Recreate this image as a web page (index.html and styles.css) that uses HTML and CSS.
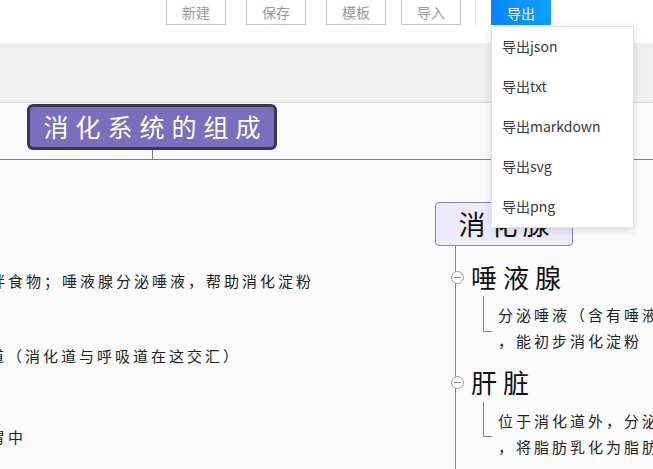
FILE: index.html
```html
<!DOCTYPE html>
<html lang="zh-CN">
<head>
<meta charset="utf-8">
<title>思维导图</title>
<link rel="stylesheet" href="styles.css">
</head>
<body>
<header class="toolbar">
  <button class="btn btn-new">新建</button>
  <button class="btn btn-save">保存</button>
  <button class="btn btn-tpl">模板</button>
  <button class="btn btn-import">导入</button>
  <span class="sep"></span>
  <button class="btn btn-export">导出</button>
</header>
<div class="ribbon"></div>
<main class="canvas">
  <svg class="links" width="653" height="366" viewBox="0 0 653 366">
    <g fill="none" stroke="#7f73c6" stroke-width="1">
      <line x1="0" y1="56.5" x2="653" y2="56.5"/>
      <line x1="152.5" y1="47" x2="152.5" y2="56"/>
      <line x1="504.5" y1="56" x2="504.5" y2="99"/>
      <line x1="455.5" y1="143" x2="455.5" y2="366"/>
      <polyline points="483.5,193 483.5,228.5 492,228.5"/>
      <polyline points="483.5,299 483.5,333.5 492,333.5"/>
    </g>
    <g fill="#fff" stroke="#9a9a9a" stroke-width="1">
      <circle cx="457.5" cy="174.5" r="6"/>
      <circle cx="457.5" cy="279.5" r="6"/>
    </g>
    <g stroke="#888" stroke-width="1">
      <line x1="454" y1="174.5" x2="461" y2="174.5"/>
      <line x1="454" y1="279.5" x2="461" y2="279.5"/>
    </g>
  </svg>

  <div class="node root">消化系统的组成</div>
  <div class="node branch">消化腺</div>
  <div class="node sub sub-1">唾液腺</div>
  <div class="node sub sub-2">肝脏</div>

  <div class="note note-r1"><div>分泌唾液（含有唾液淀粉酶）</div><div>，能初步消化淀粉</div></div>
  <div class="note note-r2"><div>位于消化道外，分泌胆汁</div><div>，将脂肪乳化为脂肪微粒</div></div>

  <div class="note-l note-l1">口腔：牙齿咀嚼、舌搅拌食物；唾液腺分泌唾液，帮助消化淀粉</div>
  <div class="note-l note-l2">咽：食物和空气的共同通道（消化道与呼吸道在这交汇）</div>
  <div class="note-l note-l3">胃：暂时储存食物，初步消化蛋白质，食物停留在胃中</div>

  <ul class="menu">
    <li>导出json</li>
    <li>导出txt</li>
    <li>导出markdown</li>
    <li>导出svg</li>
    <li>导出png</li>
  </ul>
</main>
</body>
</html>
```

FILE: styles.css
```css
html, body {
  margin: 0;
  padding: 0;
}
body {
  width: 653px;
  height: 469px;
  overflow: hidden;
  background: #fbfbfb;
  font-family: "Noto Sans CJK SC", "Noto Sans", sans-serif;
  position: relative;
}
.toolbar {
  height: 43px;
  background: #fff;
  display: flex;
  align-items: flex-start;
  padding-left: 166px;
  box-sizing: border-box;
}
.btn {
  width: 60px;
  height: 25px;
  margin: 0;
  padding: 0;
  border: 1px solid #c4c4c4;
  border-top: none;
  background: #fff;
  color: #999;
  font-family: "Noto Sans CJK SC", sans-serif;
  font-size: 14px;
  line-height: 23px;
  text-align: center;
  box-sizing: border-box;
}
.btn-save, .btn-tpl { margin-left: 20px; }
.btn-import { margin-left: 15px; }
.sep {
  width: 1px;
  height: 25px;
  background: #e0e0e0;
  margin-left: 14px;
}
.btn-export {
  margin-left: 15px;
  border: none;
  background: linear-gradient(90deg, #0b82ff, #0ea2ff);
  color: #fff;
  line-height: 24px;
}
.ribbon {
  height: 59px;
  background: #f0f0f0;
  border-bottom: 1px solid #dadada;
}
.canvas {
  position: relative;
  height: 366px;
  background: #fbfbfb;
}
.links {
  position: absolute;
  left: 0;
  top: 0;
}
.node {
  position: absolute;
  box-sizing: border-box;
  white-space: nowrap;
}
.root {
  left: 27px;
  top: 1px;
  width: 250px;
  height: 46px;
  background: #7a6ebd;
  border: 3px solid #3b355c;
  border-radius: 6px;
  color: #fff;
  font-size: 25px;
  letter-spacing: 7px;
  line-height: 38px;
  text-align: center;
  padding-left: 7px;
}
.branch {
  left: 435px;
  top: 99px;
  width: 138px;
  height: 44px;
  background: #eeebf8;
  border: 1px solid #8a7fcf;
  border-radius: 4px;
  color: #111;
  font-size: 27px;
  letter-spacing: 5px;
  line-height: 41px;
  text-align: center;
  padding-left: 5px;
}
.sub {
  left: 471px;
  color: #111;
  font-size: 26px;
  letter-spacing: 6px;
  line-height: 36px;
}
.sub-1 { top: 156px; }
.sub-2 { top: 261px; }
.note {
  position: absolute;
  left: 498px;
  font-size: 15px;
  letter-spacing: 3px;
  line-height: 26px;
  color: #222;
  white-space: nowrap;
}
.note-r1 { top: 199px; }
.note-r2 { top: 305px; }
.note-l {
  position: absolute;
  font-size: 15px;
  letter-spacing: 3px;
  line-height: 26px;
  color: #222;
  white-space: nowrap;
  text-align: right;
}
.note-l1 { top: 165px; right: 339px; }
.note-l2 { top: 240px; right: 412px; }
.note-l3 { top: 321px; right: 627px; }
.menu {
  position: absolute;
  left: 491px;
  top: -77px;
  width: 143px;
  margin: 0;
  padding: 0;
  list-style: none;
  background: #fff;
  border: 1px solid #e2e2e2;
  box-shadow: 0 2px 8px rgba(0, 0, 0, 0.14);
  box-sizing: border-box;
}
.menu li {
  height: 40px;
  line-height: 38px;
  padding-left: 10px;
  font-size: 14px;
  color: #3a3a3a;
}
```
